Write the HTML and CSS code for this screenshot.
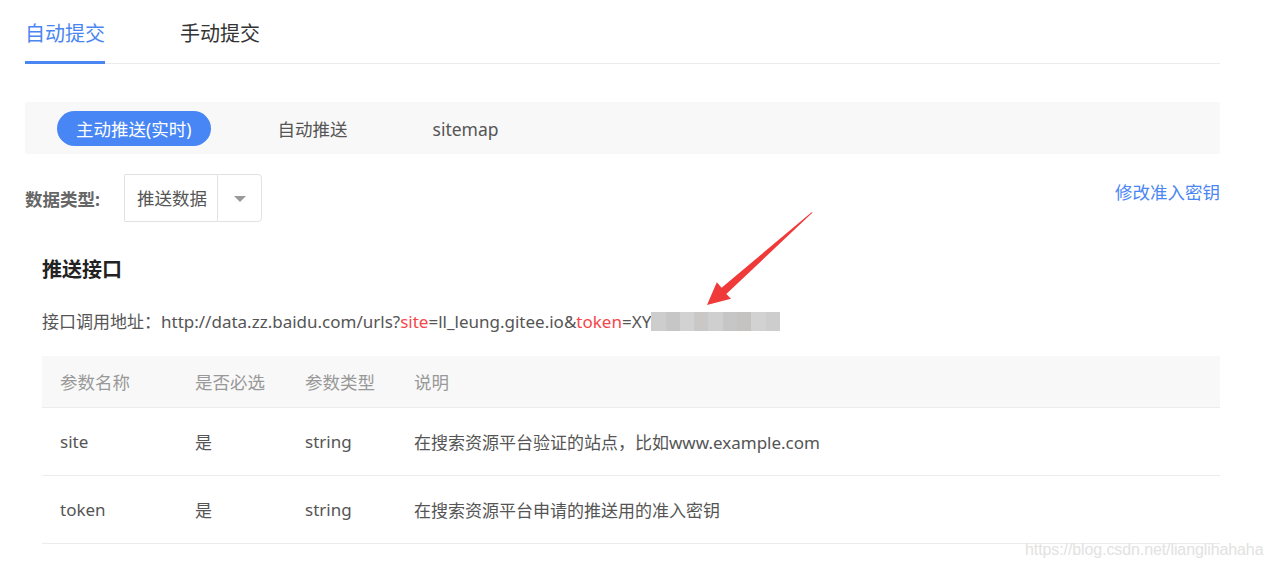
FILE: index.html
```html
<!DOCTYPE html>
<html lang="zh-CN">
<head>
<meta charset="utf-8">
<title>自动提交</title>
<link rel="stylesheet" href="styles.css">
</head>
<body>
<div class="page">
  <div class="tabs">
    <div class="tab active">自动提交</div>
    <div class="tab">手动提交</div>
  </div>

  <div class="subnav">
    <span class="sub-item pill">主动推送(实时)</span>
    <span class="sub-item">自动推送</span>
    <span class="sub-item">sitemap</span>
  </div>

  <div class="type-row">
    <span class="type-label">数据类型:</span>
    <div class="select">
      <span class="select-value">推送数据</span>
      <span class="select-btn"><span class="caret"></span></span>
    </div>
    <a class="key-link">修改准入密钥</a>
  </div>

  <div class="section">
    <h3 class="section-title">推送接口</h3>
    <p class="api-line">接口调用地址：http://data.zz.baidu.com/urls?<span class="hl">site</span>=ll_leung.gitee.io&amp;<span class="hl">token</span>=XY<span class="mosaic"><i class="m1"></i><i class="m2"></i><i class="m3"></i><i class="m4"></i><i class="m5"></i><i class="m2"></i><i class="m6"></i><i class="m3"></i><i class="m1"></i></span></p>

    <table class="params">
      <thead>
        <tr>
          <th class="c1">参数名称</th>
          <th class="c2">是否必选</th>
          <th class="c3">参数类型</th>
          <th>说明</th>
        </tr>
      </thead>
      <tbody>
        <tr>
          <td>site</td>
          <td>是</td>
          <td>string</td>
          <td>在搜索资源平台验证的站点，比如www.example.com</td>
        </tr>
        <tr>
          <td>token</td>
          <td>是</td>
          <td>string</td>
          <td>在搜索资源平台申请的推送用的准入密钥</td>
        </tr>
      </tbody>
    </table>
  </div>

  <svg class="arrow" width="1274" height="570" viewBox="0 0 1274 570" aria-hidden="true">
    <polygon points="812.6,212.6 726.3,293.9 731,298.8 707,305 716.8,282.2 721.6,287.8 811.6,212.2" fill="#f03a3a"/>
  </svg>

  <div class="watermark">https://blog.csdn.net/lianglihahaha</div>
</div>
</body>
</html>
```

FILE: styles.css
```css
html, body {
  margin: 0;
  padding: 0;
  background: #fff;
}

body {
  font-family: "Noto Sans", "Noto Sans CJK SC", sans-serif;
  font-size: 17px;
  color: #555;
}

.page {
  position: relative;
  box-sizing: border-box;
  width: 1274px;
  height: 570px;
  padding-left: 25px;
  padding-right: 54px;
  overflow: hidden;
}

/* top tabs */
.tabs {
  display: flex;
  gap: 75px;
  border-bottom: 1px solid #ebebeb;
  height: 63px;
}

.tab {
  box-sizing: border-box;
  height: 64px;
  padding-top: 19px;
  line-height: 30px;
  font-size: 20px;
  color: #333;
  border-bottom: 3px solid transparent;
}

.tab.active {
  color: #4a86f2;
  border-bottom-color: #4a86f2;
}

/* secondary nav */
.subnav {
  margin-top: 38px;
  height: 52px;
  background: #f8f8f8;
  display: flex;
  align-items: center;
  padding-left: 32px;
  gap: 49px;
}

.sub-item {
  padding: 0 18px;
  height: 35px;
  line-height: 36px;
  font-size: 17.5px;
  color: #555;
  border-radius: 18px;
}

.sub-item.pill {
  background: #4786f4;
  color: #fff;
  padding: 0 19px;
}

/* data type row */
.type-row {
  margin-top: 20px;
  display: flex;
  align-items: center;
  height: 48px;
  font-size: 17.5px;
}

.type-label {
  font-weight: bold;
  color: #666;
  width: 99px;
}

.select {
  display: flex;
  height: 48px;
  box-sizing: border-box;
  border: 1px solid #e2e2e2;
  border-radius: 0 4px 4px 0;
}

.select-value {
  width: 93px;
  box-sizing: border-box;
  padding-left: 12px;
  line-height: 46px;
  border-right: 1px solid #e2e2e2;
  color: #555;
}

.select-btn {
  width: 43px;
  display: flex;
  align-items: center;
  justify-content: center;
}

.caret {
  width: 0;
  height: 0;
  border-left: 6px solid transparent;
  border-right: 6px solid transparent;
  border-top: 6px solid #999;
  margin-top: 2px;
}

.key-link {
  margin-left: auto;
  color: #4a86f2;
  align-self: flex-start;
  line-height: 36px;
  cursor: pointer;
}

/* section */
.section {
  padding-left: 17px;
}

.section-title {
  margin: 35px 0 0;
  font-size: 20px;
  line-height: 26px;
  color: #222;
  font-weight: bold;
}

.api-line {
  margin: 26px 0 0;
  line-height: 26px;
  color: #555;
  white-space: nowrap;
}

.hl {
  color: #f5474b;
}

.mosaic {
  display: inline-flex;
  vertical-align: middle;
  height: 19px;
  margin-top: -3px;
}

.mosaic i {
  display: block;
  width: 14.3px;
  height: 19px;
}

.mosaic .m1 { background: #cdcdcd; }
.mosaic .m2 { background: #c6c6c6; }
.mosaic .m3 { background: #d2d2d2; }
.mosaic .m4 { background: #c9c8c7; }
.mosaic .m5 { background: #cfcfd0; }
.mosaic .m6 { background: #c4c3c1; }

/* table */
.params {
  margin-top: 21px;
  width: 1178px;
  border-collapse: collapse;
  font-size: 17px;
}

.params th,
.params td {
  text-align: left;
  padding: 0 18px;
  border-bottom: 1px solid #ececec;
  white-space: nowrap;
}

.params th {
  height: 51px;
  background: #f8f8f8;
  font-weight: normal;
  font-size: 17.5px;
  color: #999;
}

.params td {
  height: 67px;
  color: #555;
}

.params .c1 { width: 99px; }
.params .c2 { width: 74px; }
.params .c3 { width: 73px; }

/* overlays */
.arrow {
  position: absolute;
  left: 0;
  top: 0;
  pointer-events: none;
}

.watermark {
  position: absolute;
  left: 1025px;
  top: 541px;
  font-family: "Liberation Sans", Arial, sans-serif;
  font-size: 16px;
  color: #e2e2e2;
  letter-spacing: -0.1px;
  white-space: nowrap;
}
```
